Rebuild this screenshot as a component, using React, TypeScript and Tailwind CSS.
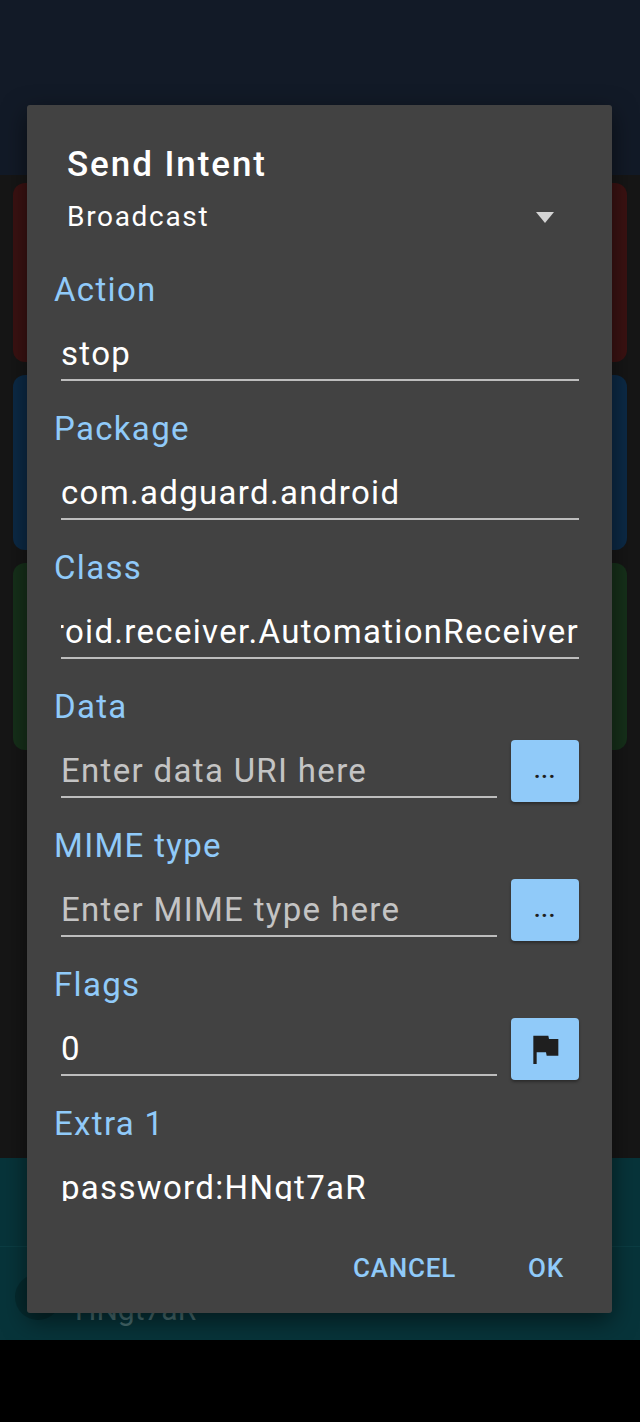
import type { ReactNode } from 'react'

const FONT = { fontFamily: 'Roboto, "Noto Sans", "Liberation Sans", sans-serif' }

function Backdrop() {
  return (
    <div className="flex min-h-[1422px] w-[640px] flex-col bg-black">
      <div className="h-[175px] bg-[#121a27]" />
      <div className="flex h-[983px] flex-col gap-[13px] bg-[#161616] px-[13px] pt-[8px]">
        <div className="h-[179px] rounded-[12px] bg-[#3b1212]" />
        <div className="h-[175px] rounded-[12px] bg-[#0c2a46]" />
        <div className="h-[187px] rounded-[12px] bg-[#16301a]" />
      </div>
      <div className="flex h-[182px] flex-col bg-[#07343a]">
        <div className="h-[88px]" />
        <div className="h-px bg-[#0b3d43]" />
        <div className="flex items-center gap-[14px] px-[15px] pt-[14px]">
          <div className="h-[46px] w-[46px] rounded-full bg-[#052a2e]" />
          <span className="pt-[26px] text-[30px] text-[#4a6f72]">HNgt7aR</span>
        </div>
      </div>
      <div className="flex-1 bg-black" />
    </div>
  )
}

function Underline({ children }: { children: ReactNode }) {
  return (
    <div className="flex min-w-0 flex-1 flex-col">
      <div className="h-[40px] overflow-hidden whitespace-nowrap text-[33px] leading-[40px] tracking-[0.04em]">
        {children}
      </div>
      <div className="mt-[5px] h-[2px] bg-[#bdbdbd]" />
    </div>
  )
}

function SideButton({ children }: { children: ReactNode }) {
  return (
    <div className="-mb-[4px] -mt-[11px] ml-[14px] flex h-[62px] w-[68px] shrink-0 items-center justify-center rounded-[4px] bg-[#90caf9] text-[#1f1f1f] shadow-[0_2px_3px_rgba(0,0,0,0.35)]">
      {children}
    </div>
  )
}

function Field({ label, first, children }: { label: string; first?: boolean; children: ReactNode }) {
  return (
    <div className={first ? 'flex flex-col' : 'mt-[28px] flex flex-col'}>
      <div className="h-[40px] text-[33px] leading-[40px] tracking-[0.04em] text-[#90caf9]">{label}</div>
      <div className="ml-[7px] mt-[24px] flex items-start">{children}</div>
    </div>
  )
}

function Dots() {
  return <span className="text-[22px] font-bold leading-none tracking-[1px]">...</span>
}

function FlagIcon() {
  return (
    <svg width="40" height="40" viewBox="0 0 24 24" fill="#1f1f1f">
      <path d="M14.4 6L14 4H5v17h2v-7h5.6l.4 2h7V6z" />
    </svg>
  )
}

function SendIntentDialog() {
  return (
    <div className="absolute left-[27px] top-[105px] flex h-[1208px] w-[585px] flex-col rounded-[3px] bg-[#424242] text-white shadow-[0_8px_24px_rgba(0,0,0,0.5)]">
      <div className="flex h-[1096px] flex-col overflow-hidden pl-[27px] pr-[33px] pt-[39px]">
        <div className="ml-[13px] h-[42px] text-[35px] font-medium leading-[42px] tracking-[0.055em]">Send Intent</div>
        <div className="ml-[13px] mt-[13px] flex h-[36px] items-center justify-between pr-[25px]">
          <span className="text-[28px] leading-[36px] tracking-[0.06em]">Broadcast</span>
          <svg width="18" height="11" viewBox="0 0 18 11" fill="#d4d4d4">
            <path d="M0 0h18L9 11z" />
          </svg>
        </div>
        <div className="mt-[35px] flex flex-col">
          <Field label="Action" first>
            <Underline>stop</Underline>
          </Field>
          <Field label="Package">
            <Underline>com.adguard.android</Underline>
          </Field>
          <Field label="Class">
            <Underline>
              <div className="flex justify-end">com.adguard.android.receiver.AutomationReceiver</div>
            </Underline>
          </Field>
          <Field label="Data">
            <Underline>
              <span className="text-[#c4c4c4]">Enter data URI here</span>
            </Underline>
            <SideButton>
              <Dots />
            </SideButton>
          </Field>
          <Field label="MIME type">
            <Underline>
              <span className="text-[#c4c4c4]">Enter MIME type here</span>
            </Underline>
            <SideButton>
              <Dots />
            </SideButton>
          </Field>
          <Field label="Flags">
            <Underline>0</Underline>
            <SideButton>
              <FlagIcon />
            </SideButton>
          </Field>
          <Field label="Extra 1">
            <Underline>password:HNgt7aR</Underline>
          </Field>
        </div>
      </div>
      <div className="mt-[51px] flex justify-end gap-[72px] pr-[48px] text-[26px] font-medium leading-[32px] tracking-[0.03em] text-[#90caf9]">
        <span>CANCEL</span>
        <span>OK</span>
      </div>
    </div>
  )
}

export default function App() {
  return (
    <div className="relative w-[640px] overflow-hidden" style={FONT}>
      <Backdrop />
      <SendIntentDialog />
    </div>
  )
}
